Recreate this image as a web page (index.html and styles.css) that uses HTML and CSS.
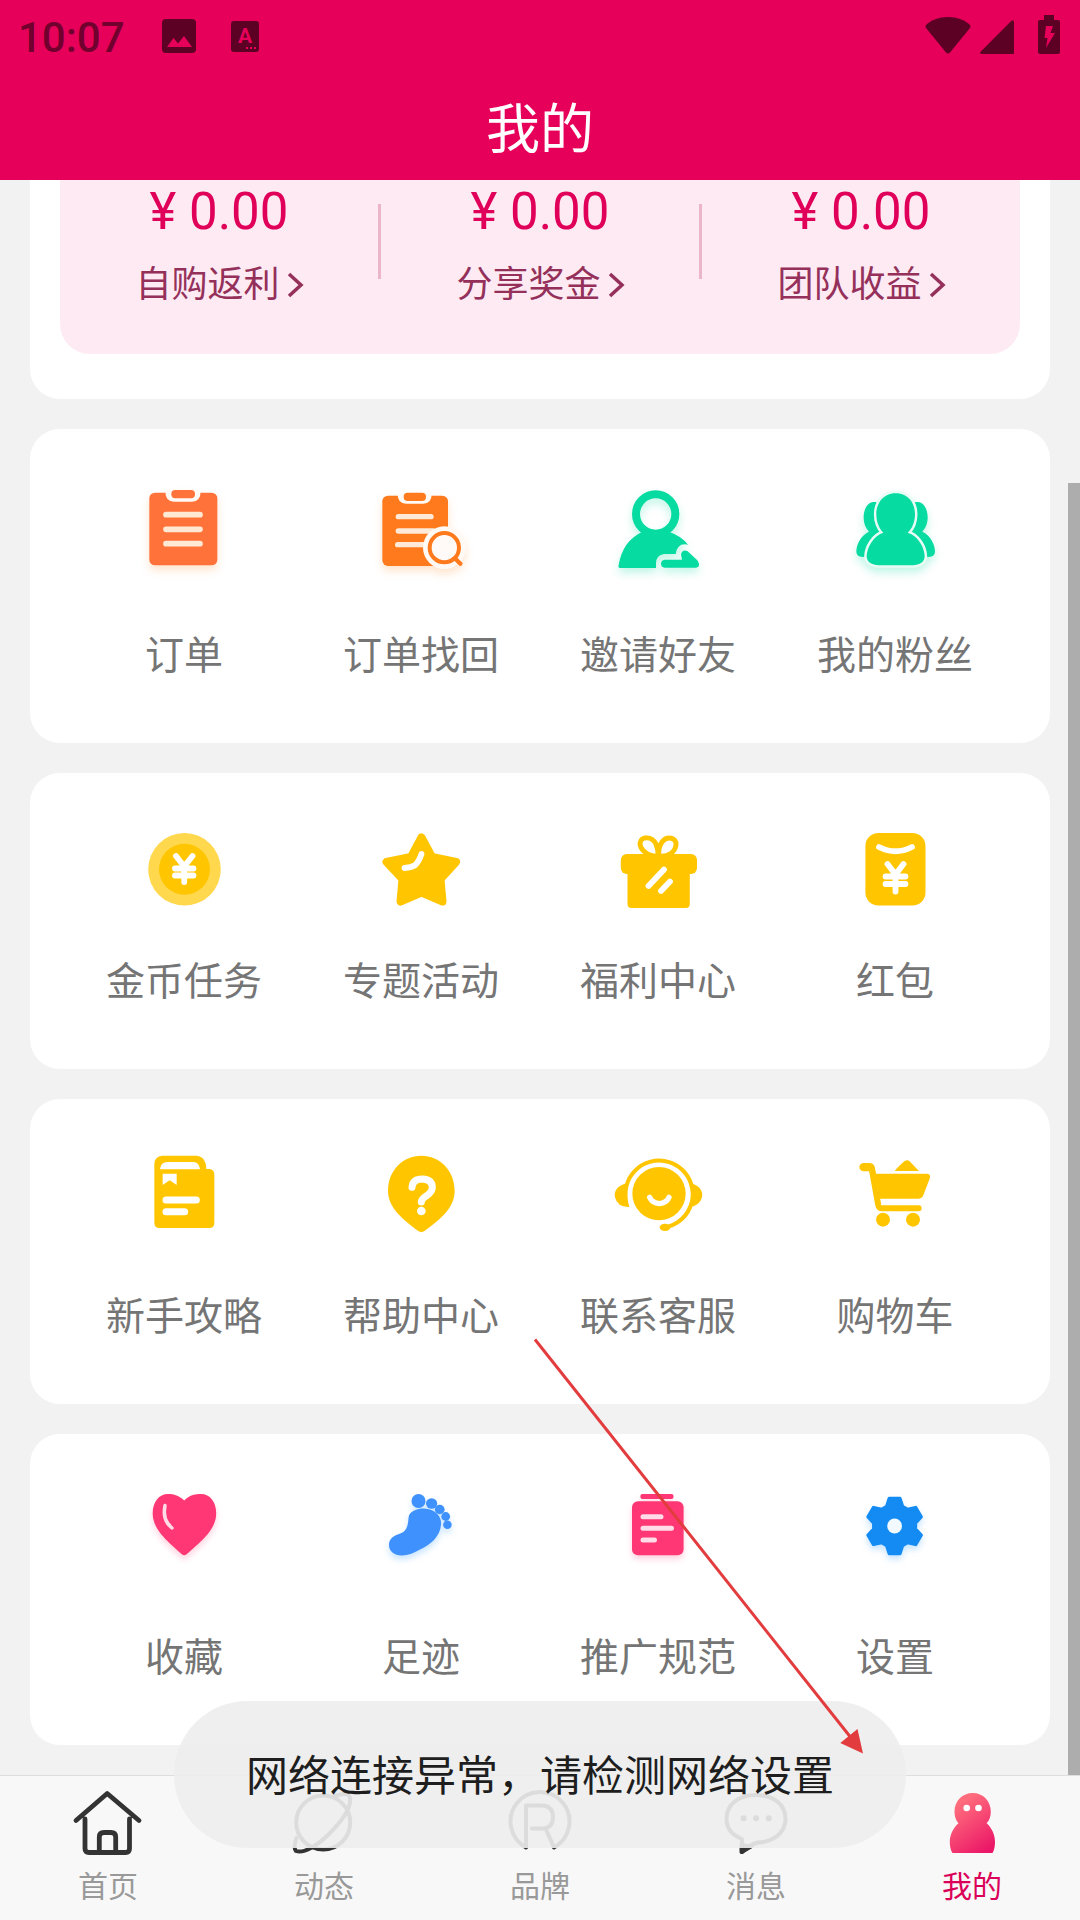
FILE: index.html
```html
<!DOCTYPE html>
<html lang="zh-CN">
<head>
<meta charset="utf-8">
<title>我的</title>
<link rel="stylesheet" href="styles.css">
</head>
<body>
<div class="app">
  <header class="header">
    <div class="status">
      <span class="clock">10:07</span>
      <svg class="status-photo" width="34" height="34" viewBox="0 0 34 34"><rect width="34" height="34" rx="4"/><path class="cut" d="M5 28L11.500 19L16 24.500L22 17L30 28Z"/></svg>
      <svg class="status-lang" width="28" height="31" viewBox="0 0 28 31"><rect width="28" height="31" rx="3"/><text x="14" y="22" text-anchor="middle">A</text><path class="cut" d="M15 26h2v2h-2zM19 26h2v2h-2zM23 26h2v2h-2z"/></svg>
      <span class="spacer"></span>
      <svg class="wifi" width="46" height="37" viewBox="0 0 46 37"><path d="M23 0C32 0 40 3 45 8Q46 9 45 11L25 35.500Q23 37.500 21 35.500L1 11Q0 9 1 8C6 3 14 0 23 0Z"/></svg>
      <svg class="signal" width="34" height="34" viewBox="0 0 34 34"><path d="M31.500 .8Q34 -1 34 2V34H2Q-1 34 .8 31.500Z"/></svg>
      <svg class="battery" width="22" height="39" viewBox="0 0 22 39"><path d="M6 0H16V5H20Q22 5 22 7V37Q22 39 20 39H2Q0 39 0 37V7Q0 5 2 5H6Z"/><path class="cut" d="M8 11H15L12.500 18H17L8 33L9.500 23H6.500Z"/></svg>
    </div>
    <h1 class="title">我的</h1>
  </header>

  <main class="content">
    <section class="card wallet">
      <div class="stats">
        <div class="stat">
          <div class="amount">¥ 0.00</div>
          <div class="stat-name">自购返利<svg class="chevron" width="18" height="26" viewBox="0 0 18 26"><path d="M3 2L15 13L3 24"/></svg></div>
        </div>
        <i class="divider"></i>
        <div class="stat">
          <div class="amount">¥ 0.00</div>
          <div class="stat-name">分享奖金<svg class="chevron" width="18" height="26" viewBox="0 0 18 26"><path d="M3 2L15 13L3 24"/></svg></div>
        </div>
        <i class="divider"></i>
        <div class="stat">
          <div class="amount">¥ 0.00</div>
          <div class="stat-name">团队收益<svg class="chevron" width="18" height="26" viewBox="0 0 18 26"><path d="M3 2L15 13L3 24"/></svg></div>
        </div>
      </div>
    </section>

    <section class="card menu menu-orders">
      <div class="item">
        <svg class="icon glow-orange" viewBox="99 60 303 300">
          <rect x="148" y="98" width="204" height="218" rx="17" fill="#ff7239"/>
          <path d="M196 94H302Q302 125 276 125H222Q196 125 196 94Z" fill="#fffaf5"/>
          <rect x="214" y="90" width="71" height="25" rx="12" fill="#ff7239"/>
          <path d="M198 164H300M198 208H300M198 251H300" stroke="#ffe9d4" stroke-width="17" stroke-linecap="round"/>
        </svg>
        <span class="label">订单</span>
      </div>
      <div class="item">
        <svg class="icon glow-orange" viewBox="810 60 303 300">
          <rect x="847" y="107" width="197" height="211" rx="17" fill="#ff7a1c"/>
          <path d="M893 103H995Q995 131 970 131H918Q893 131 893 103Z" fill="#fffaf5"/>
          <rect x="911" y="98" width="67" height="25" rx="12" fill="#ff7a1c"/>
          <path d="M895 170H993M895 213H1000M893 254H980" stroke="#ffe9d8" stroke-width="16" stroke-linecap="round"/>
          <circle cx="1033" cy="263" r="64" fill="#fffaf6"/>
          <circle cx="1033" cy="263" r="44" fill="#fffaf7" stroke="#ff7a1c" stroke-width="12"/>
          <path d="M1066 296L1081 311" stroke="#ff7a1c" stroke-width="13" stroke-linecap="round"/>
        </svg>
        <span class="label">订单找回</span>
      </div>
      <div class="item">
        <svg class="icon glow-green" viewBox="141 60 303 300" fill="#06dba1">
          <circle cx="287" cy="162" r="59" fill="none" stroke="#06dba1" stroke-width="24"/>
          <path d="M180 324Q174 324 176 315Q188 243 246 216Q287 204 328 216Q364 228 384 254Q352 247 347 282H312Q288 286 288 310V324Z"/>
          <path d="M314 299H366L363 283Q368 267 383 274L412 301Q424 320 408 323H314Q303 321 303 311Q303 300 314 299Z"/>
        </svg>
        <span class="label">邀请好友</span>
      </div>
      <div class="item">
        <svg class="icon glow-green" viewBox="852 60 303 300" fill="#06dba1">
          <path d="M950 127C925 120 911 145 911 172C911 195 920 207 927 215C900 228 889 255 889 275Q889 292 915 291L970 250Z"/>
          <path d="M1064 127C1089 120 1103 145 1103 172C1103 195 1094 207 1087 215C1114 228 1125 255 1125 275Q1125 292 1099 291L1044 250Z"/>
          <path class="knockout" d="M1007 100C1045 100 1065 130 1065 162C1065 185 1057 205 1043 218C1075 228 1093 262 1094 288Q1094 316 1050 316H964Q920 316 920 288C921 262 940 228 970 218C957 205 949 185 949 162C949 130 970 100 1007 100Z"/>
        </svg>
        <span class="label">我的粉丝</span>
      </div>
    </section>

    <section class="card menu menu-rewards">
      <div class="item">
        <svg class="icon" viewBox="0 0 101 100">
          <circle cx="51.500" cy="49.300" r="36.300" fill="#ffd84e"/><circle cx="51.500" cy="49.300" r="25.500" fill="#ffc600"/>
          <path d="M43 36L51.200 46.500L59.500 36M51.200 46V62M42 48.500H60.500M42 55.500H60.500" class="mark"/>
        </svg>
        <span class="label">金币任务</span>
      </div>
      <div class="item">
        <svg class="icon" viewBox="0 0 101 100" fill="#ffc600">
          <path d="M51.500 17.500L62 37L86 42L70.500 59L72.500 81.500L51.500 72.500L30.500 81.500L32.500 59L16.500 42L41 37Z" stroke="#ffc600" stroke-width="8" stroke-linejoin="round"/>
          <path d="M51.500 34Q49 41.500 45 45.300Q41 47.800 34.500 48" class="mark"/>
        </svg>
        <span class="label">专题活动</span>
      </div>
      <div class="item">
        <svg class="icon" viewBox="0 0 101 100" fill="#ffc600">
          <path d="M51.500 36C40 37 33 29 33 23C34 16 45 16 49 24Q51 29 51.500 36C52 28 52 27 55 22C60 15 70 18 69 25C68 32 62 37 51.500 36Z" fill="#fff" stroke="#ffc600" stroke-width="5"/>
          <rect x="13.800" y="34" width="76.200" height="20" rx="6"/>
          <path d="M20.500 45H82.800V84Q82.800 88 78.800 88H24.500Q20.500 88 20.500 84Z"/>
          <path d="M57 49.500L41.500 66M63 61.500L54 71" class="mark"/>
        </svg>
        <span class="label">福利中心</span>
      </div>
      <div class="item">
        <svg class="icon" viewBox="0 0 101 100" fill="#ffc600">
          <rect x="21.400" y="13" width="60.100" height="72.500" rx="13"/>
          <path d="M35 27Q51.500 35.500 68 27M43.500 44L51.500 54.500L59.500 44M51.500 54V71.500M41.500 56.500H61.500M41.500 64H61.500" class="mark"/>
        </svg>
        <span class="label">红包</span>
      </div>
    </section>

    <section class="card menu menu-help">
      <div class="item">
        <svg class="icon" viewBox="99 60 303 300" fill="#ffc600">
          <path d="M187 77H290Q318 80 319 117H328Q343 119 343 134V279Q343 294 328 294H178Q163 294 163 279V103Q163 79 187 77Z"/>
          <path fill="#fff" d="M180 118Q182 96 203 96H280Q298 97 300 118ZM188 131H230V165L209 151L188 165Z"/>
          <path d="M198 210H289M198 245H254" stroke="#fff" stroke-width="21" stroke-linecap="round"/>
        </svg>
        <span class="label">新手攻略</span>
      </div>
      <div class="item">
        <svg class="icon" viewBox="810 60 303 300" fill="#ffc600">
          <path d="M964 77C1020 77 1064 122 1064 182C1064 235 1020 268 972 304Q964 309 956 304C910 268 864 235 864 182C864 122 908 77 964 77Z"/>
          <path d="M936 172Q938 147 967 147Q997 148 997 173Q997 184 980 197Q964 207 964 216" fill="none" stroke="#fff" stroke-width="21" stroke-linecap="round"/>
          <circle cx="964" cy="243" r="13" fill="#fff"/>
        </svg>
        <span class="label">帮助中心</span>
      </div>
      <div class="item">
        <svg class="icon" viewBox="141 60 303 300" fill="#ffc600">
          <circle cx="297" cy="191" r="80"/>
          <path d="M200 165A101 101 0 1 1 324 290" fill="none" stroke="#ffc600" stroke-width="12"/>
          <path d="M198 160C165 170 162 190 165 202Q172 232 208 231Q198 200 206 165ZM395 160C425 170 429 190 426 202Q420 225 392 231Q400 195 388 165Z"/>
          <ellipse cx="315" cy="292" rx="16" ry="11"/>
          <path d="M269 202Q277 219 298 221Q319 219 327 202" fill="none" stroke="#fff" stroke-width="16" stroke-linecap="round"/>
        </svg>
        <span class="label">联系客服</span>
      </div>
      <div class="item">
        <svg class="icon" viewBox="852 60 303 300" fill="#ffc600">
          <path d="M910 111H928Q935 111 936 121L955 226Q957 235 966 235H1076" fill="none" stroke="#ffc600" stroke-width="18" stroke-linecap="round"/>
          <path d="M910 99H930Q944 101 945 115L948 131H1102Q1112 133 1110 143L1090 196Q1086 206 1076 206H950L932 124H910Q898 121 898 111Q899 101 910 99Z"/>
          <path d="M1004 123Q1014 110 1034 93Q1041 88 1048 93L1077 123Z"/>
          <circle cx="969" cy="269" r="21"/><circle cx="1059" cy="269" r="21"/>
        </svg>
        <span class="label">购物车</span>
      </div>
    </section>

    <section class="card menu menu-more">
      <div class="item">
        <svg class="icon glow-pink" viewBox="0 0 101 100">
          <path d="M51.200 20.500C57 14.500 63 14 68 14C77 14 83.200 22 83.200 33C83.200 49 70 60 54.500 73.500Q51.200 77 48 73.500C33 60 19.700 49 19.700 33C19.700 22 26 14 35 14C41 14 46 15.500 51.200 20.500Z" fill="#ff3774"/>
          <path d="M32 25.500Q29 40 39 48" fill="none" stroke="#ffdce8" stroke-width="3.500" stroke-linecap="round"/>
        </svg>
        <span class="label">收藏</span>
      </div>
      <div class="item">
        <svg class="icon glow-blue" viewBox="0 0 101 100" fill="#3f91fd">
          <ellipse cx="48.500" cy="21" rx="7" ry="7"/><ellipse cx="61.600" cy="23.500" rx="5.600" ry="5.200"/><ellipse cx="69.700" cy="29.500" rx="4.900" ry="4.700"/><circle cx="75.700" cy="36.500" r="4.400"/><circle cx="77.400" cy="44.700" r="4.300"/>
          <path d="M38.500 38C39 31 47 28.500 54 28.500C66 29 72 37 71 45C70 57 60 65 49 70C43 73 38 75.500 32 75.500C24 75.500 19 71 19 65C19 59 23 56 29 54C36 52 38 47 38.500 38Z"/>
        </svg>
        <span class="label">足迹</span>
      </div>
      <div class="item">
        <svg class="icon glow-pink" viewBox="0 0 101 100" fill="#ff3774">
          <rect x="33.400" y="14" width="33.100" height="5" rx="2"/><rect x="25" y="21.300" width="51.600" height="54" rx="6"/>
          <path d="M36 36.700H54M36 48.300H64.500M36 60H47.500" stroke="#ffdce8" stroke-width="5" stroke-linecap="round"/>
        </svg>
        <span class="label">推广规范</span>
      </div>
      <div class="item">
        <svg class="icon glow-blue" viewBox="0 0 101 100">
          <path d="M45.300 18.500L55.900 18.500L58.500 26.500L63.500 29.500L71.700 27.600L77.100 36.900L71.400 43.100L71.400 48.900L77.100 55.100L71.700 64.400L63.500 62.500L58.500 65.500L55.900 73.500L45.300 73.500L42.700 65.500L37.700 62.500L29.500 64.400L24.100 55.100L29.800 48.900L29.800 43.100L24.100 36.900L29.500 27.600L37.700 29.500L42.700 26.500Z" fill="#138bf2" stroke="#138bf2" stroke-width="3.500" stroke-linejoin="round"/>
          <circle cx="50.600" cy="46" r="7.400" fill="#f2faff"/>
        </svg>
        <span class="label">设置</span>
      </div>
    </section>
    <div class="scrollbar"></div>
  </main>

  <nav class="tabs">
    <a class="tab">
      <svg class="tab-icon" viewBox="0 0 80 80"><path d="M8 35.500L39.200 8.500L71 35.500M17 34V63.500Q17 67.500 21 67.500H57.500Q61.500 67.500 61.500 63.500V34M31.300 67V52Q31.300 47.500 36 47.500H43Q47.700 47.500 47.700 52V67"/></svg>
      首页
    </a>
    <a class="tab">
      <svg class="tab-icon thin" viewBox="0 0 80 80"><circle cx="39.200" cy="37.500" r="27"/><path d="M51 11Q68 5 66 17C65 27 56 38 45 49C34 60 20 69 12 66Q9 63 12.500 53"/></svg>
      动态
    </a>
    <a class="tab">
      <svg class="tab-icon thin" viewBox="1 0 80 80"><path d="M27 62.500A29.500 29.500 0 1 1 55 62.500L46.500 43.500M27 62.500V20.500H43Q54 21 54 32Q54 43.500 43 43.500H33"/></svg>
      品牌
    </a>
    <a class="tab">
      <svg class="tab-icon thin" viewBox="0 0 80 80"><path d="M26 54C16 50 10.500 43 10.500 34C10.500 19 23 10 40 10C57 10 69.500 19 69.500 34C69.500 48 57 57 42 57.500Q33 60 26 67Z"/><path class="tail" d="M25.500 60V67L35 61.500Z"/><path d="M27.500 33.300h.1M40 33.300h.1M52.700 33.300h.1" stroke-width="6"/></svg>
      消息
    </a>
    <a class="tab active">
      <svg class="tab-icon" viewBox="0 0 80 80">
        <defs><linearGradient id="body" x1=".2" y1="0" x2=".75" y2="1"><stop offset=".15" stop-color="#ff6c7c"/><stop offset="1" stop-color="#eb1768"/></linearGradient></defs>
        <path class="person" d="M40.800 8C51 8 58.800 16 58.800 26.500Q58.800 34 54.600 38.300C60 43 63 50 63 57Q63 64 60.500 68H20.500Q17.800 64 17.800 57C17.800 50 21 43 26.500 38.300Q22.500 34 22.500 26.500C22.500 16 30.500 8 40.800 8Z"/>
        <circle class="eye" cx="34.700" cy="23" r="3.300"/><circle class="eye" cx="46.500" cy="23" r="3.300"/>
      </svg>
      我的
    </a>
  </nav>

  <div class="toast">网络连接异常，请检测网络设置</div>
  <svg class="pointer" width="340" height="424" viewBox="530 1335 340 424"><path d="M535 1339.500L852 1739" fill="none" stroke="#e23c3e" stroke-width="3"/><path d="M840.300 1743L857.500 1729L863 1753.500Z" fill="#e23c3e"/></svg>
</div>
</body>
</html>
```
FILE: styles.css
```css
* { box-sizing: border-box; }

body {
  margin: 0;
  font-family: Roboto, "Noto Sans CJK SC", sans-serif;
}

.app {
  position: relative;
  display: flex;
  flex-direction: column;
  width: 1080px;
  height: 1920px;
  overflow: hidden;
  background: #f2f2f2;
}

.header {
  flex: none;
  height: 180px;
  background: #e6005a;
}

.status {
  display: flex;
  height: 76px;
  padding: 0 20px 0 18px;
  fill: #5c0024;
}
.clock {
  width: 144px;
  margin-top: 13px;
  font-size: 42px;
  line-height: 50px;
  font-weight: 500;
  color: #72002e;
}
.status .cut, .status text { fill: #e6005a; }
.status text { font: 700 21px Roboto, sans-serif; }
.status-photo { margin-top: 19px; }
.status-lang { margin: 21px 0 0 35px; }
.spacer { flex: 1; }
.wifi { margin: 17px 9px 0 0; }
.signal { margin: 20px 24px 0 0; }
.battery { margin-top: 15px; }

.title {
  margin: 0;
  height: 104px;
  padding-top: 3px;
  font-size: 54px;
  font-weight: 400;
  line-height: 104px;
  text-align: center;
  color: #fff;
}

.content {
  position: relative;
  flex: none;
  display: flex;
  flex-direction: column;
  gap: 30px;
  height: 1595px;
  padding: 0 30px;
}

.card {
  flex: none;
  border-radius: 30px;
  background: #fff;
}

.wallet {
  height: 219px;
  padding: 0 30px;
  border-radius: 0 0 30px 30px;
}
.stats {
  display: flex;
  height: 174px;
  border-radius: 0 0 30px 30px;
  background: #fdeaf3;
}
.stat { flex: 1; text-align: center; }
.amount {
  padding-top: 2px;
  font-size: 51px;
  line-height: 60px;
  color: #e00059;
}
.stat-name {
  display: flex;
  align-items: center;
  justify-content: center;
  gap: 6px;
  height: 52px;
  margin-top: 17px;
  padding-left: 1px;
  font-size: 36px;
  line-height: 52px;
  color: #94305a;
}
.chevron { fill: none; stroke: #94305a; stroke-width: 3.500; }
.divider {
  width: 3px;
  height: 75px;
  margin-top: 24px;
  background: #ebb5ca;
}

.menu {
  display: grid;
  grid-template-columns: repeat(4, 237px);
  padding-left: 35px;
}
.menu-orders { height: 314px; padding-top: 51px; --label-gap: 48px; }
.menu-rewards { height: 296px; padding-top: 47px; --label-gap: 34px; }
.menu-help { height: 305px; padding-top: 51px; --label-gap: 39px; }
.menu-more { height: 311px; padding-top: 46px; --label-gap: 50px; }

.item {
  display: flex;
  flex-direction: column;
  align-items: center;
  gap: var(--label-gap);
}
.icon { width: 101px; height: 100px; }
.label {
  padding-left: 1px;
  font-size: 39px;
  line-height: 56px;
  color: #757575;
}
.mark {
  fill: none;
  stroke: #fff;
  stroke-width: 5.800;
  stroke-linecap: round;
  stroke-linejoin: round;
}
.knockout { stroke: #e6fcf5; stroke-width: 15; paint-order: stroke; }
.glow-orange { filter: drop-shadow(0 5px 4px rgba(255, 150, 60, .25)); }
.glow-green { filter: drop-shadow(0 5px 4px rgba(6, 219, 161, .25)); }
.glow-pink { filter: drop-shadow(0 4px 3px rgba(255, 55, 116, .22)); }
.glow-blue { filter: drop-shadow(0 4px 3px rgba(40, 150, 255, .25)); }

.scrollbar {
  position: absolute;
  top: 303px;
  right: 0;
  bottom: 0;
  width: 12px;
  background: #adadad;
}

.tabs {
  display: flex;
  height: 145px;
  border-top: 1px solid #dedede;
  background: #f8f8f8;
}
.tab {
  flex: 1;
  display: flex;
  flex-direction: column;
  align-items: center;
  gap: 1px;
  padding-top: 9px;
  font-size: 30px;
  line-height: 42px;
  color: #999;
}
.tab.active { color: #db0058; }
.tab-icon {
  width: 80px;
  height: 80px;
  fill: none;
  stroke: #333;
  stroke-width: 4.800;
  stroke-linecap: round;
  stroke-linejoin: round;
}
.tab-icon.thin { stroke-width: 4; }
.tab-icon .tail { fill: #333; }
.person { fill: url(#body); stroke: none; }
.eye { fill: #fff; stroke: none; }

.toast {
  position: absolute;
  top: 1701px;
  left: 174px;
  width: 732px;
  height: 147px;
  padding-top: 2px;
  border-radius: 73.500px;
  background: rgba(237, 237, 237, .91);
  font-size: 42px;
  line-height: 147px;
  text-align: center;
  white-space: nowrap;
  color: #1e1e1e;
}

.pointer {
  position: absolute;
  top: 1335px;
  left: 530px;
}
```
